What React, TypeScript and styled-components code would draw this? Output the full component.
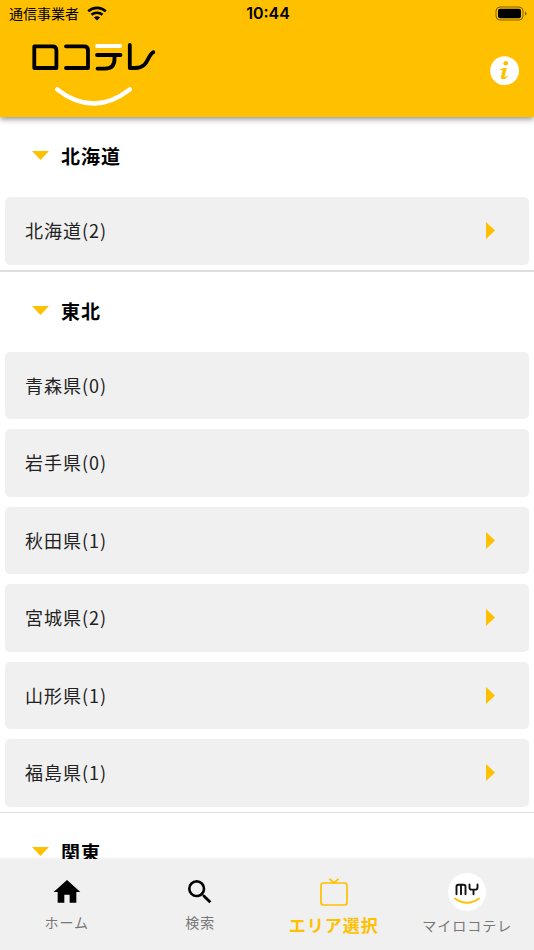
import React from "react";
import styled, { createGlobalStyle } from "styled-components";
import { MdHome, MdSearch } from "react-icons/md";

const YELLOW = "#ffc000";

const GlobalStyle = createGlobalStyle`
  *, *::before, *::after { box-sizing: border-box; }
  body {
    margin: 0;
    background: #fff;
    color: #222;
    font-family: "Noto Sans CJK JP", "Noto Sans", sans-serif;
  }
  a { color: inherit; text-decoration: none; }
  button { font: inherit; letter-spacing: inherit; color: inherit; border: 0; padding: 0; background: none; cursor: pointer; }
  h2, p { margin: 0; }
`;

const Page = styled.div`
  display: flex;
  flex-direction: column;
  height: 100vh;
`;

const Header = styled.header`
  position: relative;
  z-index: 1;
  flex: none;
  background: ${YELLOW};
  box-shadow: 0 2px 6px rgba(0, 0, 0, 0.45);
`;

const StatusBar = styled.div`
  display: grid;
  grid-template-columns: 1fr auto 1fr;
  align-items: center;
  height: 26px;
  padding: 0 7px 0 9px;
  color: #000;
`;

const Carrier = styled.div`
  display: flex;
  align-items: center;
  gap: 8px;
  font-size: 14px;
  line-height: 26px;
  font-weight: 400;
`;

const Clock = styled.time`
  font-family: Inter, sans-serif;
  font-size: 16px;
  font-weight: 600;
`;

const Battery = styled.div`
  display: flex;
  justify-content: flex-end;
`;

const Brand = styled.div`
  display: flex;
  align-items: flex-start;
  justify-content: space-between;
  height: 91px;
  padding: 15px 14px 0 30px;
`;

const InfoButton = styled.button`
  display: flex;
  margin-top: 15px;
`;

const AreaList = styled.main`
  flex: 1;
  min-height: 0;
  overflow-y: auto;
  scrollbar-width: none;
`;

const Region = styled.section<{ $line: number }>`
  padding-bottom: 5px;
  border-bottom: ${(p) => p.$line}px solid #dedede;
`;

const RegionTitle = styled.h2`
  font-size: 19px;
  font-weight: 700;
  letter-spacing: 1px;
  color: #000;
`;

const RegionToggle = styled.button`
  display: flex;
  align-items: center;
  gap: 12px;
  width: 100%;
  height: 80px;
  padding: 0 32px 3px;
`;

const Prefectures = styled.div`
  display: grid;
  gap: 10px;
  padding: 0 5px;
`;

const Prefecture = styled.button`
  display: flex;
  align-items: center;
  justify-content: space-between;
  padding: 18px 34px 18px 20px;
  border-radius: 5px;
  background: #f0f0f0;
  font-size: 18px;
  line-height: 1.75;
  letter-spacing: 1px;
  text-align: left;
`;

const TabBar = styled.nav`
  position: relative;
  z-index: 1;
  flex: none;
  display: grid;
  grid-template-columns: repeat(4, 1fr);
  height: 91px;
  padding-top: 14px;
  background: #f0f0f0;
  box-shadow: 0 0 3px rgba(0, 0, 0, 0.12);
`;

const Tab = styled.a`
  display: flex;
  flex-direction: column;
  align-items: center;
  color: #000;
`;

const TabIcon = styled.span<{ $gap?: number }>`
  display: flex;
  align-items: center;
  height: 38px;
  margin-bottom: ${(p) => p.$gap ?? 0}px;
`;

const TabLabel = styled.span<{ $active?: boolean }>`
  font-size: ${(p) => (p.$active ? 17 : 14)}px;
  line-height: ${(p) => (p.$active ? 27 : 22)}px;
  font-weight: ${(p) => (p.$active ? 700 : 400)};
  letter-spacing: 1px;
  color: ${(p) => (p.$active ? YELLOW : "#777")};
  white-space: nowrap;
`;

const WifiIcon = () => (
  <svg width="20" height="15" viewBox="0 0 20 15" aria-hidden="true" fill="none" stroke="#000" strokeWidth="2.6">
    <path d="M1.2 5.3C6.2 .7 13.8 .7 18.8 5.3" />
    <path d="M4.5 8.8C7.6 6 12.4 6 15.5 8.8" />
    <path d="M10 14.5 6.9 11.5C8.7 9.9 11.3 9.9 13.1 11.5Z" fill="#000" stroke="none" />
  </svg>
);

const BatteryIcon = () => (
  <svg width="32" height="15" viewBox="0 0 32 15" role="img" aria-label="バッテリー">
    <rect x="1" y="1" width="27" height="13" rx="4" fill="none" stroke="#000" strokeOpacity=".5" />
    <rect x="3" y="2.7" width="23" height="9.6" rx="2" />
    <path d="M30 5.5Q31.5 6 31.5 7.5T30 9.5Z" fillOpacity=".5" />
  </svg>
);

const Logo = () => (
  <svg width="128" height="66" viewBox="0 0 128 66" role="img" aria-label="ロコテレ" fill="none" strokeLinecap="round" strokeLinejoin="round">
    <g stroke="#000" strokeWidth="3.8">
      <path d="M4.3 5.3H22.5Q26.4 5.3 26.4 9.2V27H4.3Z" />
      <path d="M36 5.3H54Q58 5.3 58 9.2V27H36" />
      <path d="M67 14H90.5M84.5 14V18Q84.5 27.6 75 27.6H67.5" />
      <path d="M99.8 4V27H105C119 27 117 14 123.3 11.2" />
    </g>
    <g stroke="#fff">
      <path d="M67 5H90" strokeWidth="3.8" />
      <path d="M27.3 48.4Q63.5 76.5 99.8 48.4" strokeWidth="4.4" />
    </g>
  </svg>
);

const InfoIcon = () => (
  <svg width="30" height="30" viewBox="0 0 30 30" aria-hidden="true">
    <circle cx="14.6" cy="14.7" r="14.4" fill="#fff" />
    <circle cx="15.8" cy="7.2" r="2.3" fill={YELLOW} />
    <path
      d="M10 13.2Q13.2 11.8 16.8 12L14.6 20.2Q14.4 21.3 15.2 21Q16.2 20.6 17.2 19.2L18 19.8Q15.8 23.3 13 23.3Q10.3 23.3 11 20.5L12.5 15Q12.8 13.7 11.8 13.9L10.3 14.3Z"
      fill={YELLOW}
    />
  </svg>
);

const DownArrow = () => (
  <svg width="17" height="9" viewBox="0 0 17 9" aria-hidden="true">
    <path d="M0 0H17L8.5 9Z" fill={YELLOW} />
  </svg>
);

const RightArrow = () => (
  <svg width="9" height="17" viewBox="0 0 9 17" aria-hidden="true">
    <path d="M0 0V17L9 8.5Z" fill={YELLOW} />
  </svg>
);

const TvIcon = () => (
  <svg width="28" height="28" viewBox="0 0 28 28" aria-hidden="true" fill="none" stroke={YELLOW} strokeWidth="1.7" strokeLinecap="round">
    <rect x="1" y="5" width="26" height="22" rx="2.6" />
    <path d="M9.8 1.2 14 5 18.2 1.2" />
  </svg>
);

const MyIcon = () => (
  <svg width="38" height="38" viewBox="0 0 38 38" aria-hidden="true" fill="none" strokeLinecap="round" strokeLinejoin="round">
    <circle cx="19" cy="19" r="19" fill="#fff" />
    <path d="M8.5 21.3V13.7Q8.5 11.8 10.4 11.8H15.6Q17.5 11.8 17.5 13.7V21.3M13 11.8V21.3" stroke="#111" strokeWidth="1.9" />
    <path d="M21.5 11.5V14.4Q21.5 16.6 23.7 16.6H27.3Q29.5 16.6 29.5 14.4V11.5M25.5 16.6V21.3" stroke="#111" strokeWidth="1.9" />
    <path d="M7 25.5Q19 34 31 25.5" stroke={YELLOW} strokeWidth="1.8" />
  </svg>
);

const regions = [
  { name: "北海道", line: 2, prefectures: [{ name: "北海道", count: 2 }] },
  {
    name: "東北",
    line: 1,
    prefectures: [
      { name: "青森県", count: 0 },
      { name: "岩手県", count: 0 },
      { name: "秋田県", count: 1 },
      { name: "宮城県", count: 2 },
      { name: "山形県", count: 1 },
      { name: "福島県", count: 1 },
    ],
  },
  { name: "関東", line: 1, prefectures: [] },
];

export default function App() {
  return (
    <Page>
      <GlobalStyle />
      <Header>
        <StatusBar>
          <Carrier>
            通信事業者
            <WifiIcon />
          </Carrier>
          <Clock>10:44</Clock>
          <Battery>
            <BatteryIcon />
          </Battery>
        </StatusBar>
        <Brand>
          <Logo />
          <InfoButton type="button" aria-label="情報">
            <InfoIcon />
          </InfoButton>
        </Brand>
      </Header>
      <AreaList>
        {regions.map((region) => (
          <Region key={region.name} $line={region.line}>
            <RegionTitle>
              <RegionToggle type="button" aria-expanded="true">
                <DownArrow />
                {region.name}
              </RegionToggle>
            </RegionTitle>
            <Prefectures>
              {region.prefectures.map((p) => (
                <Prefecture key={p.name} type="button">
                  {`${p.name}(${p.count})`}
                  {p.count > 0 && <RightArrow />}
                </Prefecture>
              ))}
            </Prefectures>
          </Region>
        ))}
      </AreaList>
      <TabBar>
        <Tab href="#home">
          <TabIcon>
            <MdHome size={32} />
          </TabIcon>
          <TabLabel>ホーム</TabLabel>
        </Tab>
        <Tab href="#search">
          <TabIcon>
            <MdSearch size={32} />
          </TabIcon>
          <TabLabel>検索</TabLabel>
        </Tab>
        <Tab href="#area" aria-current="page">
          <TabIcon>
            <TvIcon />
          </TabIcon>
          <TabLabel $active>エリア選択</TabLabel>
        </Tab>
        <Tab href="#my">
          <TabIcon $gap={3}>
            <MyIcon />
          </TabIcon>
          <TabLabel>マイロコテレ</TabLabel>
        </Tab>
      </TabBar>
    </Page>
  );
}
